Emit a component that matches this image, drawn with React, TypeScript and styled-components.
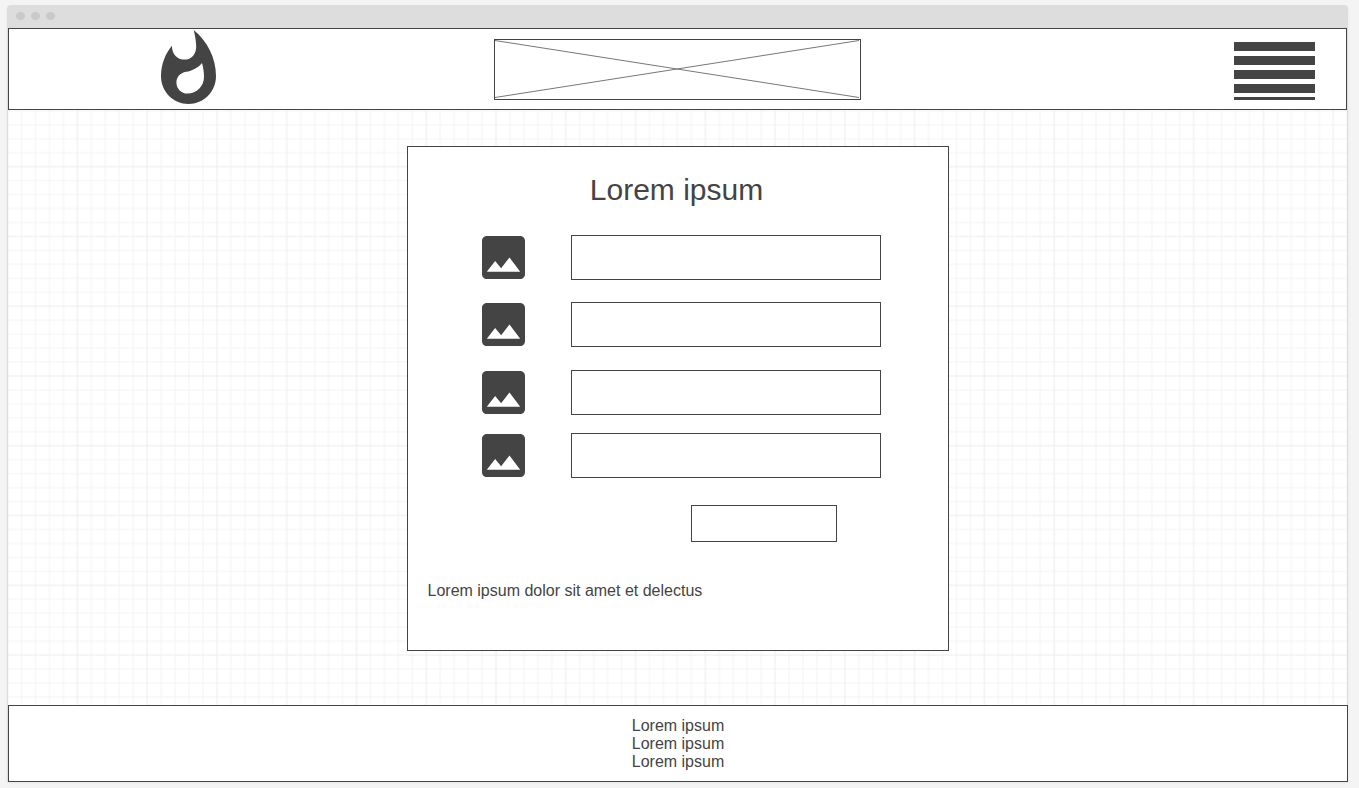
import React from "react";
import styled, { createGlobalStyle } from "styled-components";

const ink = "#444444";

const GlobalStyle = createGlobalStyle`
  *, *::before, *::after { box-sizing: border-box; }
  body {
    margin: 0;
    background: #f4f4f4;
    color: ${ink};
    font-family: "Liberation Sans", Arial, sans-serif;
    font-size: 16px;
    line-height: 18px;
  }
`;

const Page = styled.div`
  min-height: 100vh;
  display: flex;
  padding: 5px 11px 6px 7px;
`;

const Window = styled.div`
  flex: 1;
  display: flex;
  flex-direction: column;
  border-radius: 4px 4px 0 0;
  box-shadow: 0 1px 3px rgba(0, 0, 0, 0.06);
`;

const TitleBar = styled.div`
  height: 23px;
  display: flex;
  align-items: center;
  gap: 6px;
  padding: 0 9px 1px;
  background: #dddddd;
  border-radius: 4px 4px 0 0;
`;

const Dot = styled.span`
  width: 9px;
  height: 8px;
  border-radius: 50%;
  background: #c9c9c9;
`;

const Screen = styled.div`
  flex: 1;
  display: flex;
  flex-direction: column;
  border: solid #dddddd;
  border-width: 0 1px;
`;

const Header = styled.header`
  height: 82px;
  display: grid;
  grid-template-columns: 1fr auto 1fr;
  align-items: start;
  background: #ffffff;
  border: 1px solid ${ink};
`;

const Logo = styled.a`
  justify-self: start;
  margin: 1px 0 0 152px;
  svg { display: block; width: 55px; height: 74px; fill: ${ink}; }
`;

const Banner = styled.div`
  width: 367px;
  height: 61px;
  margin-top: 10px;
  border: 1px solid ${ink};
  svg { display: block; width: 100%; height: 100%; stroke: #777777; }
`;

const MenuButton = styled.button`
  justify-self: end;
  display: flex;
  flex-direction: column;
  gap: 5px;
  width: 81px;
  height: 58px;
  margin: 13px 31px 0 0;
  padding: 0;
  border: 0;
  background: none;
  overflow: hidden;
  cursor: pointer;
`;

const Bar = styled.span<{ $cut?: boolean }>`
  flex: none;
  height: ${(p) => (p.$cut ? 3 : 9)}px;
  margin-top: ${(p) => (p.$cut ? -1 : 0)}px;
  background: ${ink};
`;

const Main = styled.main`
  position: relative;
  flex: 1;
  display: flex;
  justify-content: center;
  align-items: flex-start;
  padding: 36px 0 54px;
  background: #ffffff;
`;

const Grid = styled.svg`
  position: absolute;
  inset: 0;
  width: 100%;
  height: 100%;
`;

const Card = styled.form`
  position: relative;
  width: 542px;
  display: flex;
  flex-direction: column;
  padding-bottom: 50px;
  background: #ffffff;
  border: 1px solid ${ink};
`;

const Title = styled.h1`
  margin: 26px 2px 28px 0;
  font-size: 30px;
  line-height: 34px;
  font-weight: 400;
  text-align: center;
`;

const Field = styled.label<{ $gap: number }>`
  display: flex;
  align-items: center;
  gap: 46px;
  margin-bottom: ${(p) => p.$gap}px;
  padding: 0 67px 0 74px;
  svg { flex: none; width: 43px; height: 43px; fill: ${ink}; }
`;

const Input = styled.input`
  flex: 1;
  min-width: 0;
  height: 45px;
  padding: 0 12px;
  border: 1px solid ${ink};
  border-radius: 0;
  background: #ffffff;
  color: ${ink};
  font: inherit;
`;

const Submit = styled.button`
  align-self: flex-end;
  width: 146px;
  height: 37px;
  margin-right: 111px;
  border: 1px solid ${ink};
  background: #ffffff;
  cursor: pointer;
`;

const Note = styled.p`
  margin: 40px 20px 0;
`;

const Footer = styled.footer`
  margin-right: -1px;
  padding: 11px 0 10px;
  background: #ffffff;
  border: 1px solid ${ink};
  text-align: center;
  p { margin: 0; }
`;

const fields = [
  { name: "first", gap: 22 },
  { name: "second", gap: 23 },
  { name: "third", gap: 18 },
  { name: "fourth", gap: 27 },
];

const step = 13.954;

const GridLines = () => (
  <Grid aria-hidden="true">
    <defs>
      <pattern id="grid" x="62.4" y="49.7" width={step * 5} height={step * 5} patternUnits="userSpaceOnUse">
        {[1, 2, 3, 4].map((k) => (
          <path key={k} d={`M${7 + step * k} 0V70M0 ${7 + step * k}H70`} stroke="#f3f3f3" />
        ))}
        <path d="M7 0V70M0 7H70" stroke="#ececec" />
      </pattern>
    </defs>
    <rect width="100%" height="100%" fill="url(#grid)" />
  </Grid>
);

const Flame = () => (
  <svg viewBox="4 0.67 16 21.33" preserveAspectRatio="none" aria-hidden="true">
    <path d="M13.5.67s.74 2.65.74 4.8c0 2.06-1.35 3.73-3.41 3.73-2.07 0-3.63-1.67-3.63-3.73l.03-.36C5.21 7.51 4 10.62 4 14c0 4.42 3.58 8 8 8s8-3.58 8-8C20 8.61 17.41 3.8 13.5.67zM11.71 19c-1.78 0-3.22-1.4-3.22-3.14 0-1.62 1.05-2.76 2.81-3.12 1.77-.36 3.6-1.21 4.62-2.58.39 1.29.59 2.65.59 4.04 0 2.65-2.15 4.8-4.8 4.8z" />
  </svg>
);

const Picture = () => (
  <svg viewBox="3 3 18 18" aria-hidden="true">
    <path d="M21 19V5c0-1.1-.9-2-2-2H5c-1.1 0-2 .9-2 2v14c0 1.1.9 2 2 2h14c1.1 0 2-.9 2-2zM8.5 13.5l2.5 3.01L14.5 12l4.5 6H5l3.5-4.5z" />
  </svg>
);

export default function App() {
  return (
    <>
      <GlobalStyle />
      <Page>
        <Window>
          <TitleBar>
            <Dot />
            <Dot />
            <Dot />
          </TitleBar>
          <Screen>
            <Header>
              <Logo href="#" aria-label="Home">
                <Flame />
              </Logo>
              <Banner>
                <svg viewBox="0 0 365 59" preserveAspectRatio="none" aria-hidden="true">
                  <path d="M0 .5L364 57.5M0 57.5L364 .5" />
                </svg>
              </Banner>
              <MenuButton type="button" aria-label="Menu">
                <Bar />
                <Bar />
                <Bar />
                <Bar />
                <Bar $cut />
              </MenuButton>
            </Header>
            <Main>
              <GridLines />
              <Card onSubmit={(e) => e.preventDefault()}>
                <Title>Lorem ipsum</Title>
                {fields.map((f) => (
                  <Field key={f.name} $gap={f.gap}>
                    <Picture />
                    <Input type="text" name={f.name} aria-label={f.name} />
                  </Field>
                ))}
                <Submit type="submit" aria-label="Submit" />
                <Note>Lorem ipsum dolor sit amet et delectus</Note>
              </Card>
            </Main>
            <Footer>
              <p>Lorem ipsum</p>
              <p>Lorem ipsum</p>
              <p>Lorem ipsum</p>
            </Footer>
          </Screen>
        </Window>
      </Page>
    </>
  );
}
